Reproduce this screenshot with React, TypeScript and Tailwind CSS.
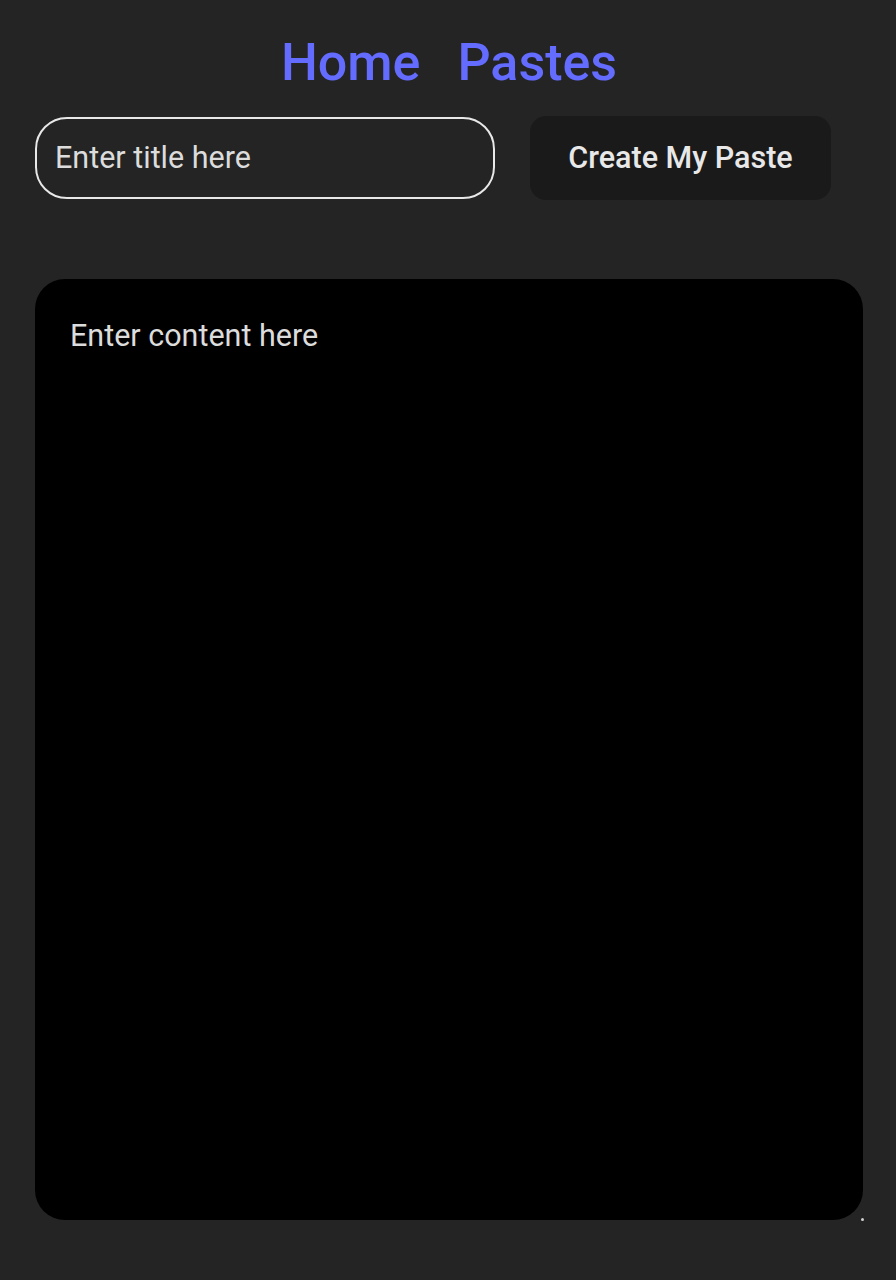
import { useState } from "react";

export default function App() {
  const [title, setTitle] = useState("");
  const [content, setContent] = useState("");

  return (
    <div className="min-h-[1280px] w-full bg-[#242424] font-['Roboto',sans-serif] text-[#e6e6e6]">
      <nav className="flex justify-center gap-[37px] pt-[33px] pl-[2px]">
        <a href="#" className="text-[52px] font-medium leading-[1.172] text-[#646cff]">
          Home
        </a>
        <a href="#" className="text-[52px] font-medium leading-[1.172] text-[#646cff]">
          Pastes
        </a>
      </nav>

      <div className="mt-[22px] flex items-center gap-[35px] pl-[35px]">
        <input
          value={title}
          onChange={(e) => setTitle(e.target.value)}
          placeholder="Enter title here"
          className="h-[82px] w-[460px] rounded-[32px] border-2 border-[#e8e8e8] bg-[#242424] pl-[18px] text-[30.5px] text-[#e6e6e6] outline-none placeholder:text-[#dcdcdc]"
        />
        <button className="h-[84px] w-[301px] rounded-[16px] bg-[#1a1a1a] text-[30.5px] font-medium text-[#e8e8e8]">
          Create My Paste
        </button>
      </div>

      <div className="relative ml-[35px] mt-[79px] w-[828px]">
        <textarea
          value={content}
          onChange={(e) => setContent(e.target.value)}
          placeholder="Enter content here"
          className="block h-[941px] w-full resize-none rounded-[30px] bg-black px-[35px] pt-[34px] text-[30.5px] text-[#e6e6e6] outline-none placeholder:text-[#dcdcdc]"
        />
        <span className="absolute -bottom-[1px] -right-[1px] h-[3px] w-[3px] rounded-full bg-[#cfcfcf]" />
      </div>
    </div>
  );
}
